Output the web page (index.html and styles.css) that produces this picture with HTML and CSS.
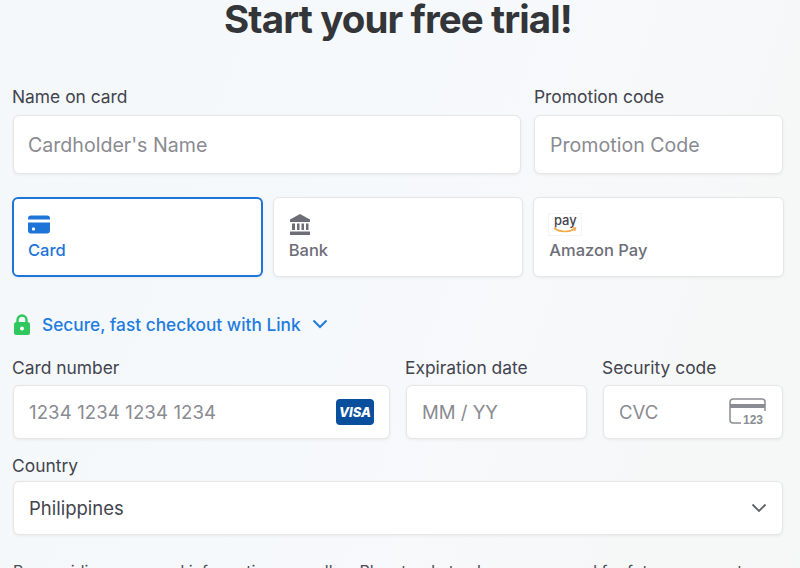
FILE: index.html
```html
<!DOCTYPE html>
<html lang="en">
<head>
  <meta charset="UTF-8" />
  <title>Start your free trial</title>
  <link rel="stylesheet" href="styles.css">
</head>
<body>
  <h1 class="title">Start your free trial!</h1>

  <div class="row name-row">
    <div class="field name-field">
      <label>Name on card</label>
      <div class="box tall"><span class="placeholder big">Cardholder's Name</span></div>
    </div>
    <div class="field promo-field">
      <label>Promotion code</label>
      <div class="box tall"><span class="placeholder big">Promotion Code</span></div>
    </div>
  </div>

  <div class="tabs">
    <div class="tab active">
      <svg class="tab-icon" width="22" height="18" viewBox="0 0 22 18">
        <path fill="#1f74d8" d="M3 0h16a3 3 0 0 1 3 3v1H0V3a3 3 0 0 1 3-3zM0 7h22v8a3 3 0 0 1-3 3H3a3 3 0 0 1-3-3z"/>
        <rect x="4" y="12" width="3" height="3" rx="1" fill="#fff"/>
      </svg>
      <span>Card</span>
    </div>
    <div class="tab">
      <svg class="tab-icon" width="22" height="21" viewBox="0 0 22 21">
        <path fill="#6d6e78" d="M11 0l10 5.500V8H1V5.500zM3 9.500h3V16H3zM8 9.500h2.500V16H8zM12.500 9.500H15V16h-2.500zM17 9.500h2.500V16H17zM1 17.500h20V21H1z"/>
      </svg>
      <span>Bank</span>
    </div>
    <div class="tab">
      <div class="pay-logo">
        <span>pay</span>
        <svg width="24" height="7" viewBox="0 0 24 7">
          <path fill="none" stroke="#f3a847" stroke-width="1.600" d="M1 1c6 4.500 15 4.500 21 .8"/>
          <path fill="none" stroke="#f3a847" stroke-width="1.300" d="M19 .6l3.600.4-1 3"/>
        </svg>
      </div>
      <span>Amazon Pay</span>
    </div>
  </div>

  <div class="link-row">
    <svg width="18" height="21" viewBox="0 0 18 21">
      <path fill="none" stroke="#30c85e" stroke-width="2.400" d="M4.500 9V6a4.500 4.500 0 0 1 9 0v3"/>
      <rect x="1" y="8" width="16" height="13" rx="2.500" fill="#30c85e"/>
      <circle cx="9" cy="14.500" r="2" fill="#fff"/>
    </svg>
    <span>Secure, fast checkout with Link</span>
    <svg class="link-chev" width="16" height="10" viewBox="0 0 16 10">
      <path fill="none" stroke="#1f7ce0" stroke-width="2" d="M1.500 1.500L8 8l6.500-6.500"/>
    </svg>
  </div>

  <div class="row card-row">
    <div class="field number-field">
      <label>Card number</label>
      <div class="box">
        <span class="placeholder digits">1234 1234 1234 1234</span>
        <div class="visa">VISA</div>
      </div>
    </div>
    <div class="field expiry-field">
      <label>Expiration date</label>
      <div class="box"><span class="placeholder">MM / YY</span></div>
    </div>
    <div class="field cvc-field">
      <label>Security code</label>
      <div class="box">
        <span class="placeholder">CVC</span>
        <svg width="38" height="28" viewBox="0 0 38 28">
          <path fill="none" stroke="#8a8c93" stroke-width="1.500" d="M12 25H4a3 3 0 0 1-3-3V4a3 3 0 0 1 3-3h29a3 3 0 0 1 3 3v9"/>
          <rect x="1" y="6" width="35" height="4" fill="#8a8c93"/>
          <text x="14" y="26" class="cvc-digits">123</text>
        </svg>
      </div>
    </div>
  </div>

  <div class="field country-field">
    <label>Country</label>
    <div class="box">
      <span class="value">Philippines</span>
      <svg width="16" height="10" viewBox="0 0 16 10">
        <path fill="none" stroke="#5f6068" stroke-width="1.800" d="M1.500 1.500L8 8l6.500-6.500"/>
      </svg>
    </div>
  </div>

  <p class="legal">By providing your card information, you allow Planetcode to charge your card for future payments</p>
</body>
</html>
```

FILE: styles.css
```css
* {
  box-sizing: border-box;
}

html, body {
  height: 100%;
}

body {
  margin: 0;
  padding: 0 17px 0 13px;
  overflow: hidden;
  font-family: Inter, sans-serif;
  color: #30313d;
  background: linear-gradient(110deg, #f4f8fb 0%, #f6f9fc 45%, #f7f8f9 75%, #f4f8f6 100%);
}

.title {
  margin: 0;
  font-size: 38.500px;
  line-height: 38px;
  font-weight: 700;
  letter-spacing: -0.9px;
  text-align: center;
  color: #333538;
}

.row {
  display: flex;
}

.name-row {
  margin-top: 47px;
  gap: 13px;
}

.name-field {
  width: 508px;
}

.promo-field {
  flex: 1;
}

.field label {
  display: block;
  height: 27px;
  margin-left: -1px;
  font-size: 17.400px;
  line-height: 24px;
  color: #43444e;
}

.name-row label {
  height: 30px;
}

.promo-field label {
  margin-left: 0;
}

.box {
  display: flex;
  align-items: center;
  justify-content: space-between;
  height: 54px;
  padding: 0 15px;
  background: #fff;
  border: 1px solid #e6e6e6;
  border-radius: 6px;
  box-shadow: 0 1px 3px rgba(0, 0, 0, 0.06);
}

.box.tall {
  height: 59px;
  padding-left: 14px;
}

.promo-field .box.tall {
  padding-left: 15px;
}

.placeholder {
  font-size: 18.600px;
  color: #8a8b92;
}

.placeholder.big {
  font-size: 19.600px;
}

.placeholder.digits {
  letter-spacing: 0.1px;
}

.value {
  font-size: 18.500px;
  color: #43444e;
}

.tabs {
  display: flex;
  gap: 10px;
  margin: 23px -1px 0 -1px;
}

.tab {
  flex: 1;
  height: 80px;
  padding: 16px 15px 0;
  background: #fff;
  border: 1px solid #e6e6e6;
  border-radius: 6px;
  box-shadow: 0 1px 3px rgba(0, 0, 0, 0.06);
  font-size: 16.500px;
  font-weight: 500;
  color: #6d6e78;
}

.tab.active {
  border: 2px solid #1f74d8;
  color: #1f74d8;
  padding: 15px 14px 0;
}

.tab-icon {
  display: block;
  height: 21px;
  margin-bottom: 5px;
}

.pay-logo {
  display: flex;
  flex-direction: column;
  align-items: center;
  width: 32px;
  height: 21px;
  margin-bottom: 5px;
  outline: 1px solid #f4f4f4;
  font-size: 13px;
  line-height: 13px;
  font-weight: 500;
  color: #44454f;
}

.pay-logo svg {
  display: block;
}

.link-row {
  display: flex;
  align-items: center;
  height: 22px;
  margin-top: 36px;
  font-size: 17.300px;
  font-weight: 500;
  color: #1f7ce0;
}

.link-row span {
  margin-left: 11px;
}

.link-chev {
  margin-left: 11px;
}

.card-row {
  margin-top: 21px;
  gap: 16px;
}

.card-row label {
  height: 29px;
}

.number-field {
  width: 377px;
}

.expiry-field {
  width: 181px;
}

.cvc-field {
  flex: 1;
}

.visa {
  width: 38px;
  height: 26px;
  border-radius: 4px;
  background: #0a4f9e;
  color: #fff;
  font-size: 13px;
  font-weight: 800;
  font-style: italic;
  line-height: 26px;
  text-align: center;
}

.cvc-digits {
  font-family: "Liberation Sans", sans-serif;
  font-size: 12px;
  font-weight: 700;
  fill: #8a8c93;
}

.country-field {
  margin-top: 15px;
}

.legal {
  margin: 26px 0 0;
  font-size: 16px;
  white-space: nowrap;
  color: #4a4b55;
}
```
